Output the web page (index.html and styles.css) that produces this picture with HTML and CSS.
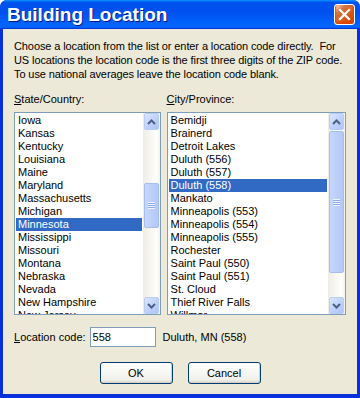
FILE: index.html
```html
<!DOCTYPE html>
<html lang="en">
<head>
    <meta charset="UTF-8">
    <meta name="viewport" content="width=device-width, initial-scale=1.0">
    <title>Building Location</title>
    <link rel="stylesheet" href="styles.css">
</head>
<body>

<div class="window">
    <div class="titlebar">
        <span class="title">Building Location</span>
        <button class="close" aria-label="Close">
            <svg width="13" height="13" viewBox="0 0 13 13">
                <path d="M2 2 L11 11 M11 2 L2 11" stroke="#fff" stroke-width="2.2" stroke-linecap="square"/>
            </svg>
        </button>
    </div>

    <div class="client">
        <p class="intro">Choose a location from the list or enter a location code directly.&nbsp; For<br>US locations the location code is the first three digits of the ZIP code.<br>To use national averages leave the location code blank.</p>

        <div class="lists">
            <div class="field">
                <label class="caption"><u>S</u>tate/Country:</label>
                <div class="listbox">
                    <ul class="items">
                        <li>Iowa</li>
                        <li>Kansas</li>
                        <li>Kentucky</li>
                        <li>Louisiana</li>
                        <li>Maine</li>
                        <li>Maryland</li>
                        <li>Massachusetts</li>
                        <li>Michigan</li>
                        <li class="selected">Minnesota</li>
                        <li>Mississippi</li>
                        <li>Missouri</li>
                        <li>Montana</li>
                        <li>Nebraska</li>
                        <li>Nevada</li>
                        <li>New Hampshire</li>
                        <li>New Jersey</li>
                    </ul>
                    <div class="scrollbar">
                        <div class="arrow up"><svg width="9" height="6" viewBox="0 0 9 6"><path d="M1 5 L4.5 1.5 L8 5" fill="none" stroke="#4d6185" stroke-width="2"/></svg></div>
                        <div class="track">
                            <div class="thumb" style="margin-top: 53px; height: 45px;"><span class="grip"></span></div>
                        </div>
                        <div class="arrow down"><svg width="9" height="6" viewBox="0 0 9 6"><path d="M1 1 L4.5 4.5 L8 1" fill="none" stroke="#4d6185" stroke-width="2"/></svg></div>
                    </div>
                </div>
            </div>

            <div class="field">
                <label class="caption"><u>C</u>ity/Province:</label>
                <div class="listbox">
                    <ul class="items">
                        <li>Bemidji</li>
                        <li>Brainerd</li>
                        <li>Detroit Lakes</li>
                        <li>Duluth (556)</li>
                        <li>Duluth (557)</li>
                        <li class="selected">Duluth (558)</li>
                        <li>Mankato</li>
                        <li>Minneapolis (553)</li>
                        <li>Minneapolis (554)</li>
                        <li>Minneapolis (555)</li>
                        <li>Rochester</li>
                        <li>Saint Paul (550)</li>
                        <li>Saint Paul (551)</li>
                        <li>St. Cloud</li>
                        <li>Thief River Falls</li>
                        <li>Willmar</li>
                    </ul>
                    <div class="scrollbar">
                        <div class="arrow up"><svg width="9" height="6" viewBox="0 0 9 6"><path d="M1 5 L4.5 1.5 L8 5" fill="none" stroke="#4d6185" stroke-width="2"/></svg></div>
                        <div class="track">
                            <div class="thumb" style="margin-top: 1px; height: 142px;"><span class="grip"></span></div>
                        </div>
                        <div class="arrow down"><svg width="9" height="6" viewBox="0 0 9 6"><path d="M1 1 L4.5 4.5 L8 1" fill="none" stroke="#4d6185" stroke-width="2"/></svg></div>
                    </div>
                </div>
            </div>
        </div>

        <div class="code-row">
            <label class="caption" for="code"><u>L</u>ocation code:</label>
            <input id="code" class="textbox" type="text" value="558">
            <span class="code-name">Duluth, MN (558)</span>
        </div>

        <div class="buttons">
            <button class="btn">OK</button>
            <button class="btn">Cancel</button>
        </div>
    </div>
</div>

</body>
</html>
```

FILE: styles.css
```css
body {
    margin: 0;
    font-family: 'Liberation Sans', Arial, sans-serif;
    font-size: 11px;
    color: #000;
    background: #fff;
}
.window {
    width: 360px;
    height: 398px;
    box-sizing: border-box;
    display: flex;
    flex-direction: column;
    background: #0831d9;
    border-radius: 7px 7px 0 0;
    overflow: hidden;
}
.titlebar {
    height: 29px;
    flex: none;
    display: flex;
    align-items: center;
    justify-content: space-between;
    padding: 0 5px 0 7px;
    background: linear-gradient(180deg, #0997ff, #0053ee 8%, #0050ee 40%, #06f 88%, #06f 93%, #005bff 95%, #003dd7 96%, #003dd7);
}
.title {
    color: #fff;
    font-weight: bold;
    font-size: 19px;
    text-shadow: 1px 1px #0a1883;
    padding-top: 1px;
}
.close {
    width: 21px;
    height: 21px;
    padding: 0;
    display: flex;
    align-items: center;
    justify-content: center;
    border: 1px solid #fff;
    border-radius: 3px;
    background: radial-gradient(circle at 90% 90%, #cc4600 0%, #dc6527 55%, #cd7546 70%, #ffccb2 90%, #fff 100%);
    box-shadow: inset 0 -1px 2px 1px #da4600;
}
.client {
    flex: 1;
    margin: 0 3px 4px;
    padding: 10px 11px 0;
    background: #ece9d8;
}
.intro {
    margin: 0;
    line-height: 14px;
    letter-spacing: -0.1px;
    white-space: nowrap;
}
.lists {
    display: flex;
    gap: 6px;
    margin-top: 11px;
}
.field {
    display: flex;
    flex-direction: column;
}
.field:first-child {
    width: 147px;
}
.field:last-child {
    width: 180px;
}
.caption {
    line-height: 14px;
    margin-bottom: 6px;
}
.listbox {
    height: 203px;
    box-sizing: border-box;
    display: flex;
    border: 1px solid #7f9db9;
    background: #fff;
    overflow: hidden;
}
.items {
    flex: 1;
    list-style: none;
    margin: 0;
    padding: 1px 1px 0;
    overflow: hidden;
}
.items li {
    height: 13px;
    line-height: 13px;
    padding-left: 2px;
    white-space: nowrap;
}
.items li.selected {
    background: #316ac5;
    color: #fff;
}
.scrollbar {
    width: 17px;
    flex: none;
    display: flex;
    flex-direction: column;
    background: linear-gradient(90deg, #eeede5, #f3f1ec 20%, #fefefb 80%, #f3f1ec);
}
.arrow {
    height: 17px;
    flex: none;
    box-sizing: border-box;
    display: flex;
    align-items: center;
    justify-content: center;
    margin: 0 1px;
    border: 1px solid #b8cdf6;
    border-radius: 2px;
    background: linear-gradient(135deg, #dbe6fe, #bccffb 60%, #b0c5f6);
}
.track {
    flex: 1;
}
.thumb {
    box-sizing: border-box;
    margin: 0 1px;
    display: flex;
    align-items: center;
    justify-content: center;
    border: 1px solid #a6bdf0;
    border-radius: 2px;
    background: linear-gradient(90deg, #c7d7fd, #bccffb 50%, #b4c8f7);
}
.grip {
    width: 7px;
    height: 7px;
    background: repeating-linear-gradient(180deg, #eef4fe 0 1px, #8caaec 1px 2px);
}
.code-row {
    display: flex;
    align-items: center;
    margin-top: 12px;
    height: 20px;
}
.code-row .caption {
    margin: 0 4px 0 0;
}
.textbox {
    width: 66px;
    height: 20px;
    box-sizing: border-box;
    border: 1px solid #7f9db9;
    padding: 0 2px;
    font: inherit;
    outline: none;
}
.code-name {
    margin-left: 7px;
}
.buttons {
    display: flex;
    justify-content: center;
    gap: 15px;
    margin-top: 15px;
}
.btn {
    width: 73px;
    height: 22px;
    padding: 0;
    font: inherit;
    color: #000;
    border: 1px solid #003c74;
    border-radius: 3px;
    background: linear-gradient(180deg, #fff, #f0f0ea 85%, #d6d0c5);
    box-shadow: inset -1px -1px #d6d0c5;
}
```
